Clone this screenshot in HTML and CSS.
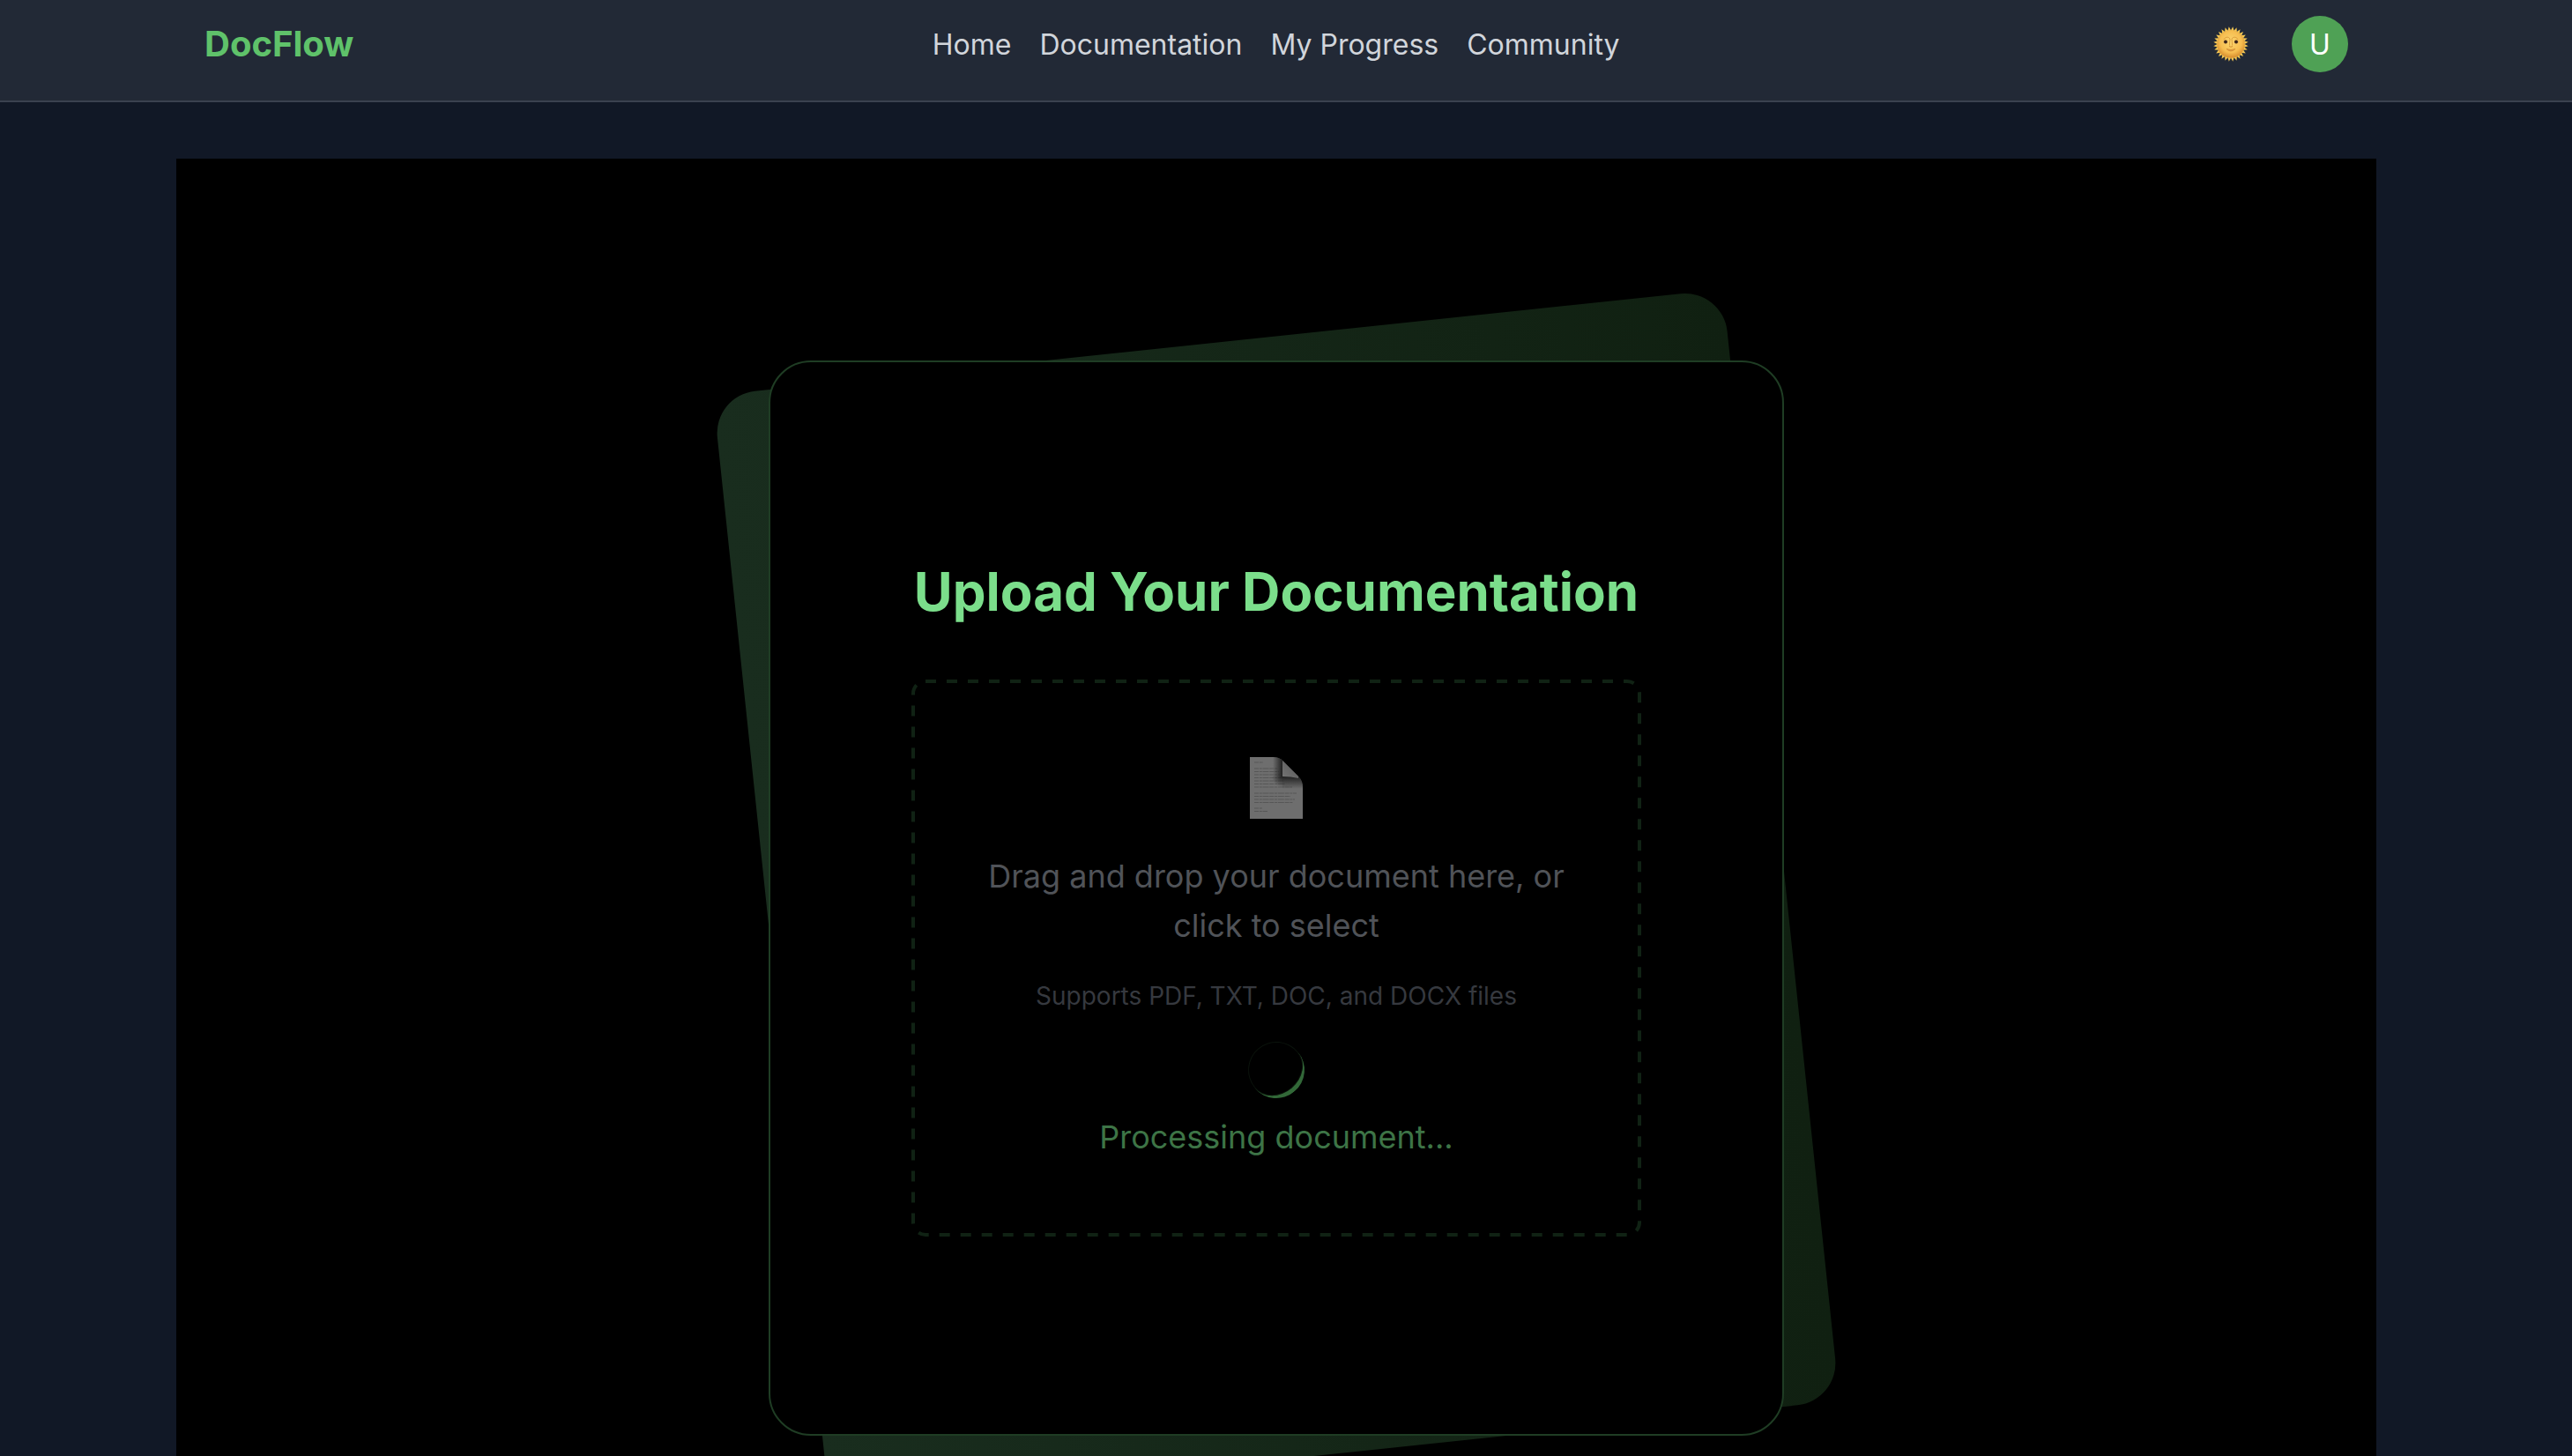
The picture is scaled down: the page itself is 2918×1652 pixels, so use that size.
FILE: index.html
```html
<!DOCTYPE html>
<html lang="en">
<head>
  <meta charset="utf-8">
  <title>DocFlow</title>
  <meta name="viewport" content="width=device-width, initial-scale=1">
  <link rel="stylesheet" href="styles.css">
</head>
<body>
  <div class="app">
    <header class="header">
      <div class="header-inner">
        <a class="logo" href="#">DocFlow</a>
        <nav class="nav">
          <a href="#">Home</a>
          <a href="#">Documentation</a>
          <a href="#">My Progress</a>
          <a href="#">Community</a>
        </nav>
        <div class="actions">
          <button class="theme-toggle" type="button" aria-label="Toggle theme">
            <svg class="sun" viewBox="0 0 40 40" aria-hidden="true">
              <defs>
                <radialGradient id="sun-face" cx="50%" cy="42%" r="55%">
                  <stop offset="0" stop-color="#fbd66f"/>
                  <stop offset="0.7" stop-color="#f6bd50"/>
                  <stop offset="1" stop-color="#dc9433"/>
                </radialGradient>
                <path id="ray" d="M18 5L20 0.200L22 5Z"/>
                <g id="rays">
                  <use href="#ray"/>
                  <use href="#ray" transform="rotate(12.857 20 20)"/>
                  <use href="#ray" transform="rotate(25.714 20 20)"/>
                  <use href="#ray" transform="rotate(38.571 20 20)"/>
                </g>
              </defs>
              <g fill="#f3c653">
                <use href="#rays" transform="rotate(6.428 20 20)"/>
                <use href="#rays" transform="rotate(57.857 20 20)"/>
                <use href="#rays" transform="rotate(109.286 20 20)"/>
                <use href="#rays" transform="rotate(160.714 20 20)"/>
                <use href="#rays" transform="rotate(212.143 20 20)"/>
                <use href="#rays" transform="rotate(263.571 20 20)"/>
                <use href="#rays" transform="rotate(315 20 20)"/>
              </g>
              <circle cx="20" cy="20" r="15.700" fill="url(#sun-face)"/>
              <path d="M12 15c1-3 5-4 7-1l-.6 7.500M28 15c-1-3-5-4-7-1l.6 7.500" fill="none" stroke="#d99a3a" stroke-width=".9"/>
              <ellipse cx="14" cy="17.500" rx="2.600" ry="1.900" fill="#d9a65a"/>
              <ellipse cx="26" cy="17.500" rx="2.600" ry="1.900" fill="#d9a65a"/>
              <circle cx="14" cy="17.500" r="1.900" fill="#3a2418"/>
              <circle cx="26" cy="17.500" r="1.900" fill="#3a2418"/>
              <path d="M18 22.500q2 1.500 4 0" fill="none" stroke="#cf8d31" stroke-width="1"/>
              <path d="M15 25.500q5 2 10 0q-5 5-10 0z" fill="#e09a42" stroke="#c98431" stroke-width=".6"/>
            </svg>
          </button>
          <button class="avatar" type="button" aria-label="User menu">U</button>
        </div>
      </div>
    </header>

    <main class="main">
      <section class="stage">
        <div class="stack">
          <div class="stack-back"></div>
          <div class="card">
            <h1 class="title">Upload Your Documentation</h1>
            <div class="dropzone">
              <svg class="dropzone-outline" aria-hidden="true"><rect x="2" y="2" rx="14" ry="14"/></svg>
              <div class="doc-icon">
                <svg viewBox="0 0 60 70" aria-hidden="true">
                  <defs>
                    <linearGradient id="curl" x1="0" y1="1" x2="1" y2="0">
                      <stop offset="0" stop-color="#747474"/>
                      <stop offset="0.5" stop-color="#666"/>
                      <stop offset="1" stop-color="#555"/>
                    </linearGradient>
                    <linearGradient id="shade-left" x1="26" y1="0" x2="37" y2="0" gradientUnits="userSpaceOnUse">
                      <stop offset="0" stop-color="#181818" stop-opacity="0"/>
                      <stop offset="1" stop-color="#181818" stop-opacity=".9"/>
                    </linearGradient>
                    <linearGradient id="shade-below" x1="0" y1="36" x2="0" y2="22" gradientUnits="userSpaceOnUse">
                      <stop offset="0" stop-color="#181818" stop-opacity="0"/>
                      <stop offset="1" stop-color="#181818" stop-opacity=".9"/>
                    </linearGradient>
                    <radialGradient id="shade-corner" cx="37" cy="22" r="12" gradientUnits="userSpaceOnUse">
                      <stop offset="0" stop-color="#181818" stop-opacity=".9"/>
                      <stop offset="1" stop-color="#181818" stop-opacity="0"/>
                    </radialGradient>
                  </defs>
                  <path d="M0 0H27Q33 0 37 4L55 22Q60 27 60 34V70H0Z" fill="#6e6e6e"/>
                  <path d="M5 6h10M5 13h27M5 16.500h28M5 20h29M5 23.500h31M5 27h33M5 30.500h35M5 34h43M5 41h48M5 44.500h41M5 48h46M5 51.500h44M5 58h9M5 61.500h15" fill="none" stroke="#565656" stroke-width="1.200" stroke-dasharray="5 .8 3 .7 7 .8"/>
                  <path d="M26 0H27Q33 0 37 4V22H26Z" fill="url(#shade-left)"/>
                  <path d="M37 22H55Q60 27 60 34V36H37Z" fill="url(#shade-below)"/>
                  <path d="M25 22H37V34H25Z" fill="url(#shade-corner)"/>
                  <path d="M37 4Q37.500 14 37 22Q47 22 55 24V22Z" fill="url(#curl)"/>
                </svg>
              </div>
              <p class="prompt">Drag and drop your document here, or click to select</p>
              <p class="formats">Supports PDF, TXT, DOC, and DOCX files</p>
              <div class="spinner"></div>
              <p class="status">Processing document...</p>
            </div>
          </div>
        </div>
      </section>
    </main>
  </div>
</body>
</html>
```
FILE: styles.css
```css
* {
  box-sizing: border-box;
}

body {
  margin: 0;
  background: #111826;
  color: #d1d5db;
  font-family: Inter, "Liberation Sans", sans-serif;
  font-size: 32px;
  line-height: 48px;
}

a {
  color: inherit;
  text-decoration: none;
}

button {
  padding: 0;
  border: 0;
  background: none;
  color: inherit;
  font: inherit;
  cursor: pointer;
}

h1,
p {
  margin: 0;
}

/* The app scrolls inside its own frame; the scrollbar itself is hidden. */
.app {
  height: 100vh;
  overflow-x: hidden;
  overflow-y: auto;
  scrollbar-width: none;
}

.header {
  padding: 18px 222px 32px 200px;
  background: #222936;
  border-bottom: 2px solid #3a414f;
}

.header-inner {
  display: flex;
  align-items: center;
  justify-content: space-between;
  padding: 0 32px;
}

.logo {
  color: #5fc26a;
  font-size: 40px;
  font-weight: 700;
}

.nav {
  display: flex;
  gap: 32px;
  padding-top: 2px;
}

.actions {
  display: flex;
  align-items: center;
  gap: 32px;
}

.theme-toggle {
  display: flex;
  margin: -8px 0;
  padding: 16px;
}

.sun {
  width: 42px;
  height: 40px;
}

.avatar {
  width: 64px;
  height: 64px;
  padding-top: 2px;
  border-radius: 50%;
  background: #4fa155;
  color: #fff;
}

.main {
  padding: 64px 222px 64px 200px;
}

.stage {
  padding: 205px 48px;
  background: #000;
}

.stack {
  position: relative;
  max-width: 1152px;
  margin: 0 auto;
  padding: 24px 0;
}

.stack-back {
  position: absolute;
  inset: 0;
  border-radius: 48px;
  background: linear-gradient(to right, #192d1e, #102011);
  transform: rotate(-6deg);
}

.card {
  position: relative;
  padding: 224px 160px;
  border: 2px solid #1f3d24;
  border-radius: 48px;
  background: #000;
}

.title {
  margin-bottom: 64px;
  color: #7bde8b;
  font-size: 60px;
  font-weight: 700;
  line-height: 72px;
  text-align: center;
}

.dropzone {
  position: relative;
  display: flex;
  flex-direction: column;
  align-items: center;
  padding: 83px 84px 85px;
  text-align: center;
}

.dropzone-outline {
  position: absolute;
  inset: 0;
  width: 100%;
  height: 100%;
}

.dropzone-outline rect {
  width: calc(100% - 4px);
  height: calc(100% - 4px);
  fill: none;
  stroke: #102214;
  stroke-width: 4px;
  stroke-dasharray: 12 12;
}

.doc-icon {
  display: flex;
  align-items: center;
  justify-content: center;
  height: 80px;
  margin-bottom: 32px;
}

.doc-icon svg {
  width: 60px;
  height: 70px;
}

.prompt {
  margin-bottom: 32px;
  color: #505358;
  font-size: 36px;
  line-height: 56px;
}

.formats {
  margin-bottom: 32px;
  color: #36393f;
  font-size: 28px;
  line-height: 40px;
}

.spinner {
  width: 64px;
  height: 64px;
  margin-bottom: 16px;
  border-bottom: 5px solid #326838;
  border-radius: 50%;
  box-shadow: inset 0 0 0 1px #0a120b;
  transform: rotate(-40deg);
}

.status {
  color: #3d7446;
  font-size: 36px;
  line-height: 56px;
}
```
